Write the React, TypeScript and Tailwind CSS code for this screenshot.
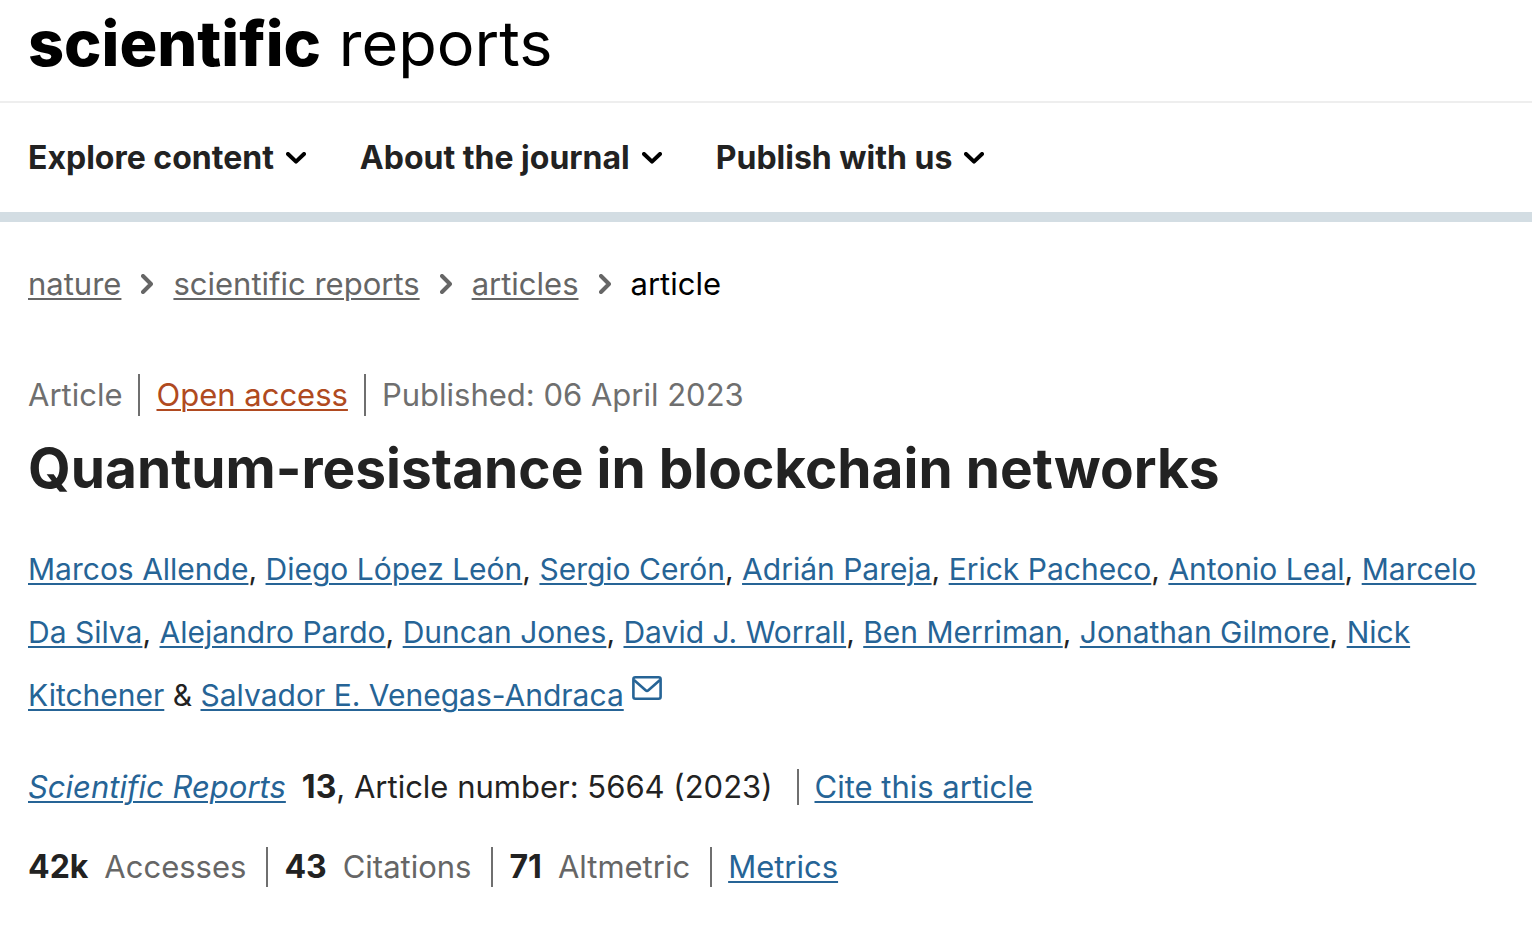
import React from 'react';

interface NavItem {
  label: string;
}

const navItems: NavItem[] = [
  { label: 'Explore content' },
  { label: 'About the journal' },
  { label: 'Publish with us' },
];

const crumbs = ['nature', 'scientific reports', 'articles'];

const authors = [
  'Marcos Allende',
  'Diego López León',
  'Sergio Cerón',
  'Adrián Pareja',
  'Erick Pacheco',
  'Antonio Leal',
  'Marcelo Da Silva',
  'Alejandro Pardo',
  'Duncan Jones',
  'David J. Worrall',
  'Ben Merriman',
  'Jonathan Gilmore',
  'Nick Kitchener',
];

const metrics = [
  { value: '42k', label: 'Accesses' },
  { value: '43', label: 'Citations' },
  { value: '71', label: 'Altmetric' },
];

const linkClass = 'text-[#266496] underline decoration-2 underline-offset-[3px]';

const ChevronDown: React.FC = () => (
  <svg className="w-5 h-3" viewBox="0 0 20 12" fill="none" stroke="#000" strokeWidth="4" strokeLinecap="round" strokeLinejoin="round" aria-hidden="true">
    <path d="M2 2l8 7.6L18 2" />
  </svg>
);

const ChevronRight: React.FC = () => (
  <svg className="w-3 h-5" viewBox="0 0 12 20" fill="none" stroke="#666" strokeWidth="4" strokeLinecap="round" strokeLinejoin="round" aria-hidden="true">
    <path d="M2 2l8 8-8 8" />
  </svg>
);

const MailIcon: React.FC = () => (
  <svg className="w-[30px] h-6 inline-block align-[6px]" viewBox="0 0 30 24" fill="none" stroke="currentColor" strokeWidth="2.6" strokeLinejoin="round" aria-hidden="true">
    <rect x="1.4" y="1.3" width="27.2" height="21.4" rx="2" />
    <path d="M2 4l11.6 10.3q1.4 1.2 2.8 0L28 4" />
  </svg>
);

const App: React.FC = () => {
  return (
    <div className="min-h-screen bg-white text-[#222] text-[31px] leading-10 font-[Inter,sans-serif]">
      {/* Journal logo */}
      <header className="px-7 pt-[3px] pb-[18px] border-b-2 border-[#eee]">
        <a href="#" className="block text-black text-[63px] leading-20">
          <span className="font-extrabold">scientific</span> reports
        </a>
      </header>

      {/* Main menu */}
      <nav className="flex gap-[54px] px-7 h-[119px] items-center border-b-10 border-[#d3dde3]">
        {navItems.map((item) => (
          <button key={item.label} className="flex items-center gap-3 text-[32px] font-bold">
            {item.label}
            <ChevronDown />
          </button>
        ))}
      </nav>

      <main className="px-7">
        <ol className="flex items-center gap-5 pt-[42px]">
          {crumbs.map((crumb) => (
            <li key={crumb} className="flex items-center gap-5">
              <a href="#" className="text-[#666] underline decoration-2 underline-offset-[3px]">{crumb}</a>
              <ChevronRight />
            </li>
          ))}
          <li className="text-black">article</li>
        </ol>

        <ul className="flex items-center pt-[70px] leading-[42px] text-[#6f6f6f]">
          <li className="pr-4 border-r-2 border-[#6f6f6f]">Article</li>
          <li className="px-4 border-r-2 border-[#6f6f6f]">
            <a href="#" className="text-[#b04a20] underline decoration-2 underline-offset-[3px]">Open access</a>
          </li>
          <li className="pl-4">Published: 06 April 2023</li>
        </ul>

        <h1 className="pt-4 text-[55px] leading-18 font-bold">Quantum-resistance in blockchain networks</h1>

        {/* Authors */}
        <p className="pt-[34px] text-[30px] leading-[63px]">
          {authors.map((author, i) => (
            <React.Fragment key={author}>
              <a href="#" className={linkClass}>{author}</a>
              {i < authors.length - 1 ? ', ' : ' & '}
            </React.Fragment>
          ))}
          <a href="#" className={linkClass}>Salvador E. Venegas-Andraca</a>
          <a href="#" className="ml-2 text-[#266496]" aria-label="Email Salvador E. Venegas-Andraca">
            <MailIcon />
          </a>
        </p>

        <div className="flex items-center pt-10">
          <p className="pr-6">
            <a href="#" className={linkClass}><i>Scientific Reports</i></a>
            <b className="pl-4 text-[32px]">13</b>, Article number: 5664 (2023)
          </p>
          <span className="h-9 border-l-2 border-[#6f6f6f]" />
          <a href="#" className={`ml-4 ${linkClass}`}>Cite this article</a>
        </div>

        <ul className="flex items-center pt-10 text-[#666]">
          {metrics.map((metric) => (
            <li key={metric.label} className="flex items-baseline gap-4 pr-5 mr-4 border-r-2 border-[#6f6f6f]">
              <b className="text-[32px] text-[#222]">{metric.value}</b>
              {metric.label}
            </li>
          ))}
          <li><a href="#" className={linkClass}>Metrics</a></li>
        </ul>
      </main>
    </div>
  );
};

export default App;
